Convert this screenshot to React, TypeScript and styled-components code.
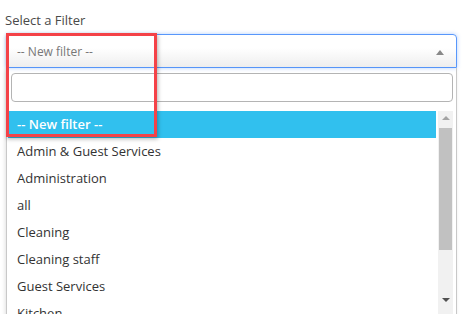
import React from 'react';
import styled, { createGlobalStyle } from 'styled-components';

const GlobalStyle = createGlobalStyle`
    html, body {
        margin: 0;
        padding: 0;
        background: #fff;
        font-family: "Open Sans", "Liberation Sans", sans-serif;
    }
`;

const Page = styled.div`
    position: relative;
    width: 462px;
    height: 314px;
    overflow: hidden;
    padding: 11px 5px 0 5px;
    box-sizing: border-box;
`;

const Label = styled.div`
    font-size: 13px;
    line-height: 18px;
    color: #4a4a4a;
    margin-bottom: 5px;
`;

const Field = styled.div`
    margin-left: 1px;
    width: 451px;
`;

const SelectBox = styled.div`
    height: 34px;
    box-sizing: border-box;
    border: 1px solid #5897fb;
    border-radius: 4px 4px 0 0;
    background: linear-gradient(to bottom, #fff 40%, #eee 100%);
    box-shadow: 0 0 4px rgba(88, 151, 251, 0.45);
    display: flex;
    align-items: center;
    justify-content: space-between;
    padding: 0 12px 0 10px;
`;

const Placeholder = styled.span`
    font-size: 12px;
    color: #777;
`;

const Caret = styled.span`
    width: 0;
    height: 0;
    border-left: 4px solid transparent;
    border-right: 4px solid transparent;
    border-bottom: 5px solid #888;
    margin-top: 2px;
`;

const Dropdown = styled.div`
    border: 1px solid #c8c8c8;
    border-top: none;
    box-shadow: -1px 2px 4px rgba(0, 0, 0, 0.12);
    padding: 5px 3px 0 1px;
    height: 260px;
    box-sizing: border-box;
`;

const Search = styled.div`
    margin: 0 0 9px 3px;
    height: 29px;
    box-sizing: border-box;
    border: 1px solid #b4b4b4;
    border-radius: 4px;
    background: #fff;
`;

const ListArea = styled.div`
    display: flex;
    gap: 2px;
    height: 220px;
`;

const Options = styled.ul`
    list-style: none;
    margin: 0;
    padding: 0;
    flex: 1;
    overflow: hidden;
`;

const Option = styled.li<{ $active?: boolean }>`
    height: 27px;
    line-height: 27px;
    padding-left: 9px;
    font-size: 13px;
    color: ${p => (p.$active ? '#fff' : '#333')};
    background: ${p => (p.$active ? '#31c0ee' : 'transparent')};
    font-weight: ${p => (p.$active ? 600 : 400)};
`;

const Scrollbar = styled.div`
    width: 15px;
    background: #f1f1f1;
    display: flex;
    flex-direction: column;
    align-items: center;
    padding-top: 5px;
    box-sizing: border-box;
`;

const Arrow = styled.span<{ $down?: boolean }>`
    width: 0;
    height: 0;
    border-left: 4px solid transparent;
    border-right: 4px solid transparent;
    ${p => (p.$down ? 'border-top: 4px solid #505050;' : 'border-bottom: 4px solid #a3a3a3;')}
`;

const Thumb = styled.div`
    width: 13px;
    height: 122px;
    background: #c1c1c1;
    margin: 8px 0 48px;
`;

const Highlight = styled.div`
    position: absolute;
    left: 6px;
    top: 33px;
    width: 151px;
    height: 104px;
    box-sizing: border-box;
    border: 3px solid #f44248;
    box-shadow: 1px 2px 4px rgba(0, 0, 0, 0.3);
    pointer-events: none;
`;

const options = [
    'Admin & Guest Services',
    'Administration',
    'all',
    'Cleaning',
    'Cleaning staff',
    'Guest Services',
    'Kitchen',
];

const App: React.FC = () => {
    return (
        <Page>
            <GlobalStyle />
            <Label>Select a Filter</Label>
            <Field>
                <SelectBox>
                    <Placeholder>-- New filter --</Placeholder>
                    <Caret />
                </SelectBox>
                <Dropdown>
                    <Search />
                    <ListArea>
                        <Options>
                            <Option $active>-- New filter --</Option>
                            {options.map(o => (
                                <Option key={o}>{o}</Option>
                            ))}
                        </Options>
                        <Scrollbar>
                            <Arrow />
                            <Thumb />
                            <Arrow $down />
                        </Scrollbar>
                    </ListArea>
                </Dropdown>
            </Field>
            <Highlight />
        </Page>
    );
};

export default App;
